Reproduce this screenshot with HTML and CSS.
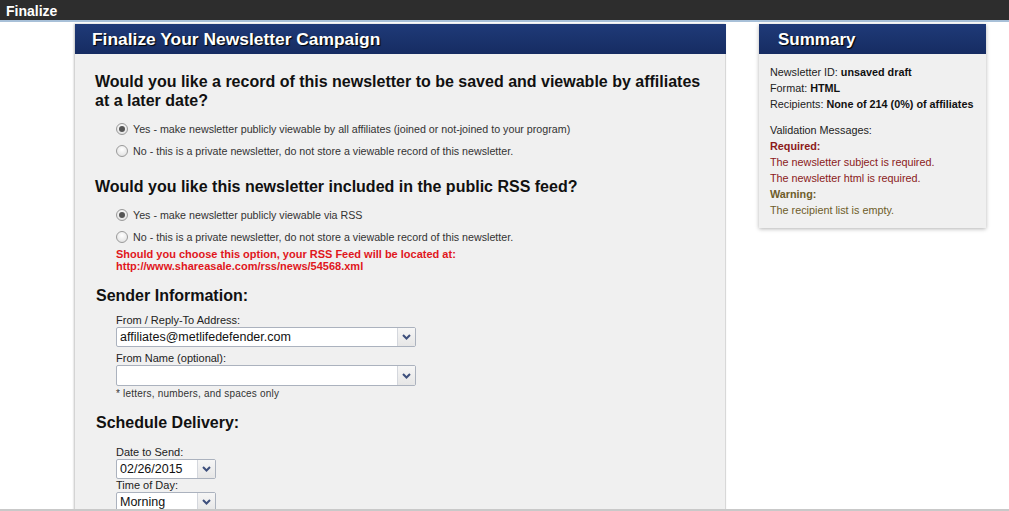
FILE: index.html
```html
<!DOCTYPE html>
<html>
<head>
<meta charset="utf-8">
<title>Finalize</title>
<link rel="stylesheet" href="styles.css">
</head>
<body>
<div class="topbar">Finalize</div>
<div class="layout">
  <div class="panel main">
    <div class="panel-head main-head">Finalize Your Newsletter Campaign</div>
    <div class="main-body">
      <h1 class="q q1">Would you like a record of this newsletter to be saved and viewable by affiliates at a later date?</h1>
      <div class="radios">
        <label class="radio"><span class="dot checked"></span>Yes - make newsletter publicly viewable by all affiliates (joined or not-joined to your program)</label>
        <label class="radio"><span class="dot"></span>No - this is a private newsletter, do not store a viewable record of this newsletter.</label>
      </div>
      <h1 class="q q2">Would you like this newsletter included in the public RSS feed?</h1>
      <div class="radios">
        <label class="radio"><span class="dot checked"></span>Yes - make newsletter publicly viewable via RSS</label>
        <label class="radio"><span class="dot"></span>No - this is a private newsletter, do not store a viewable record of this newsletter.</label>
        <div class="rss-note">Should you choose this option, your RSS Feed will be located at:<br>http://www.shareasale.com/rss/news/54568.xml</div>
      </div>
      <h2 class="sect">Sender Information:</h2>
      <div class="fields">
        <div class="flabel">From / Reply-To Address:</div>
        <div class="select wide"><span class="val">affiliates@metlifedefender.com</span><span class="arrow"><svg width="9" height="6" viewBox="0 0 9 6"><path d="M1 1 L4.5 4.5 L8 1" fill="none" stroke="#3d4f7c" stroke-width="2"/></svg></span></div>
        <div class="flabel second">From Name (optional):</div>
        <div class="select wide tall"><span class="val"></span><span class="arrow"><svg width="9" height="6" viewBox="0 0 9 6"><path d="M1 1 L4.5 4.5 L8 1" fill="none" stroke="#3d4f7c" stroke-width="2"/></svg></span></div>
        <div class="hint">* letters, numbers, and spaces only</div>
      </div>
      <h2 class="sect sched">Schedule Delivery:</h2>
      <div class="fields">
        <div class="flabel date">Date to Send:</div>
        <div class="select small"><span class="val">02/26/2015</span><span class="arrow"><svg width="9" height="6" viewBox="0 0 9 6"><path d="M1 1 L4.5 4.5 L8 1" fill="none" stroke="#3d4f7c" stroke-width="2"/></svg></span></div>
        <div class="flabel time">Time of Day:</div>
        <div class="select small"><span class="val">Morning</span><span class="arrow"><svg width="9" height="6" viewBox="0 0 9 6"><path d="M1 1 L4.5 4.5 L8 1" fill="none" stroke="#3d4f7c" stroke-width="2"/></svg></span></div>
      </div>
    </div>
  </div>
  <div class="panel summary">
    <div class="panel-head sum-head">Summary</div>
    <div class="sum-body">
      <div>Newsletter ID: <b>unsaved draft</b></div>
      <div>Format: <b>HTML</b></div>
      <div>Recipients: <b>None of 214 (0%) of affiliates</b></div>
      <div class="valid">Validation Messages:</div>
      <div class="req"><b>Required:</b></div>
      <div class="req">The newsletter subject is required.</div>
      <div class="req">The newsletter html is required.</div>
      <div class="warn"><b>Warning:</b></div>
      <div class="warn">The recipient list is empty.</div>
    </div>
  </div>
</div>
<div class="bottom-edge"></div>
</body>
</html>
```
FILE: styles.css
```css
html, body {
  margin: 0;
  padding: 0;
  background: #fff;
  font-family: "Liberation Sans", Arial, sans-serif;
  overflow: hidden;
  height: 511px;
}
.topbar {
  height: 20px;
  line-height: 22px;
  background: #2d2d2d;
  color: #fff;
  font-weight: bold;
  font-size: 14px;
  padding-left: 6px;
  border-bottom: 2px solid #a8c0d8;
}
.layout {
  display: flex;
  align-items: flex-start;
  padding-top: 2px;
  padding-left: 75px;
  gap: 33px;
}
.panel-head {
  height: 30px;
  line-height: 31px;
  background: linear-gradient(#1f3a78, #162c62);
  color: #fff;
  font-weight: bold;
  font-size: 17px;
  padding-left: 17px;
  text-shadow: 1px 1px 1px #000;
}
.main-head {
  font-size: 17.4px;
}
.main {
  width: 650px;
  height: 500px;
  background: #f0f0f0;
  box-shadow: -1px 0 2px rgba(0,0,0,0.25);
  border-right: 1px solid #d8d8d8;
}
.main .panel-head {
  margin-right: -1px;
}
.main-body {
  padding: 0 20px;
  color: #111;
}
.q {
  margin: 0;
  font-size: 16px;
  line-height: 19px;
  font-weight: bold;
  color: #111;
}
.q1 { padding-top: 18px; }
.q2 { padding-top: 15px; }
.radios {
  padding-left: 21px;
  padding-top: 8px;
}
.radio {
  display: flex;
  align-items: center;
  height: 22px;
  font-size: 10.7px;
  color: #333;
}
.dot {
  box-sizing: border-box;
  width: 12px;
  height: 12px;
  border-radius: 50%;
  border: 1px solid #9a9a9a;
  background: radial-gradient(circle at 50% 35%, #fff, #dcdcdc);
  margin-right: 5px;
  position: relative;
}
.dot.checked::after {
  content: "";
  position: absolute;
  left: 2px;
  top: 2px;
  width: 6px;
  height: 6px;
  border-radius: 50%;
  background: #555;
}
.rss-note {
  color: #e0161c;
  font-weight: bold;
  font-size: 11px;
  line-height: 12px;
}
.sect {
  margin: 0;
  padding-top: 14px;
  font-size: 16px;
  line-height: 20px;
  font-weight: bold;
  color: #111;
  padding-left: 1px;
}
.sect.sched { padding-top: 13px; }
.fields {
  padding-left: 21px;
  padding-top: 7px;
}
.flabel {
  font-size: 11px;
  line-height: 14px;
  color: #222;
}
.flabel.second { margin-top: 4px; }
.flabel.date { margin-top: 5px; }
.flabel.time { line-height: 13px; }
.select {
  box-sizing: border-box;
  display: flex;
  height: 20px;
  background: #fff;
  border: 1px solid #abb2be;
  border-radius: 2px;
}
.select.tall { height: 21px; }
.select.wide { width: 300px; }
.select.small { width: 100px; }
.select .val {
  flex: 1;
  font-size: 12.5px;
  line-height: 18px;
  padding-left: 3px;
  color: #111;
  white-space: nowrap;
  overflow: hidden;
}
.select .arrow {
  width: 17px;
  display: flex;
  align-items: center;
  justify-content: center;
  border-left: 1px solid #d4d7dd;
  background: linear-gradient(#f6f6f6, #e6e6e6);
}
.hint {
  font-size: 10px;
  letter-spacing: 0.2px;
  line-height: 13px;
  color: #333;
  padding-top: 1px;
}
.summary {
  width: 227px;
  background: #f0f0f0;
  box-shadow: 0 1px 4px rgba(0,0,0,0.3);
}
.sum-head {
  padding-left: 19px;
}
.sum-body {
  padding: 10px 4px 10px 11px;
  font-size: 10.8px;
  line-height: 16px;
  color: #222;
  white-space: nowrap;
}
.sum-body b { color: #111; }
.valid { margin-top: 10px; }
.req { color: #8b1a1a; }
.req b { color: #8b1a1a; }
.warn { color: #6e5d2a; }
.warn b { color: #6e5d2a; }
.bottom-edge {
  position: fixed;
  left: 0;
  right: 0;
  bottom: 0;
  height: 2px;
  background: #c9c9c9;
}
```
